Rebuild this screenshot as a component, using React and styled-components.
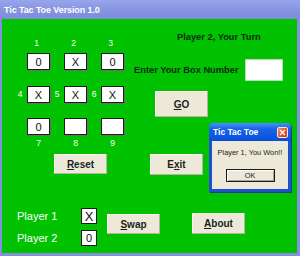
import React from "react";
import styled, { createGlobalStyle } from "styled-components";

const GlobalStyle = createGlobalStyle`
  html, body {
    margin: 0;
    padding: 0;
    background: #ffffff;
  }
  body {
    font-family: "Liberation Sans", Arial, sans-serif;
  }
`;

const Window = styled.div`
  position: relative;
  width: 300px;
  height: 256px;
  box-sizing: border-box;
  display: flex;
  flex-direction: column;
  background: #8391dd;
  padding: 0 3px 3px 2px;
  overflow: hidden;
`;

const TitleBar = styled.div`
  height: 19px;
  margin: 0 -3px 0 -2px;
  padding-left: 4px;
  display: flex;
  align-items: center;
  background: linear-gradient(#97a5ec, #8593e0 60%, #7d8cdb);
  color: #ffffff;
  font-size: 9px;
  font-weight: bold;
  letter-spacing: -0.1px;
`;

const Client = styled.div`
  flex: 1;
  background: #00c200;
  padding: 13px 0 0 11px;
  display: flex;
  flex-direction: column;
`;

const TopSection = styled.div`
  display: flex;
  gap: 10px;
  height: 116px;
`;

const Board = styled.div`
  margin-top: 6px;
  display: grid;
  grid-template-columns: repeat(3, 14px 23px);
  grid-template-rows: 15px 33px 32px 20px 10px;
`;

const Num = styled.span`
  color: #ffffff;
  font-size: 8.5px;
  line-height: ${(p) => (p.$side ? "17px" : "10px")};
  text-align: center;
  align-self: start;
  grid-column: ${(p) => p.$col};
  grid-row: ${(p) => p.$row};
  padding-right: ${(p) => (p.$row === 1 ? "4px" : "0")};
`;

const Cell = styled.div`
  grid-column: ${(p) => p.$col};
  grid-row: ${(p) => p.$row};
  align-self: start;
  height: 17px;
  box-sizing: border-box;
  background: #ffffff;
  border: 1px solid #1c1c1c;
  box-shadow: 1px 1px 0 #5d7a5d;
  display: flex;
  align-items: center;
  justify-content: center;
  font-size: 11px;
  color: #111111;
`;

const StatusPanel = styled.div`
  display: flex;
  flex-direction: column;
`;

const TurnText = styled.div`
  padding-left: 43px;
  line-height: 10px;
  font-size: 9.3px;
  font-weight: bold;
  color: #0c2a0c;
`;

const EntryRow = styled.div`
  margin-top: 17px;
  display: flex;
  align-items: center;
  gap: 6px;
  height: 22px;
`;

const EntryLabel = styled.span`
  font-size: 9.3px;
  font-weight: bold;
  color: #0c2a0c;
  padding-bottom: 1px;
`;

const EntryBox = styled.div`
  width: 38px;
  height: 22px;
  box-sizing: border-box;
  background: #ffffff;
  border: 1px solid #b9dcb9;
`;

const Button = styled.button`
  width: 53px;
  height: ${(p) => p.$h || 20}px;
  margin: ${(p) => p.$m || "0"};
  padding: 0;
  box-sizing: border-box;
  background: #ece9d8;
  border: none;
  box-shadow: inset -1px -1px 0 #b8b4a2, inset 1px 1px 0 #fbfaf4;
  font-family: "Liberation Sans", Arial, sans-serif;
  font-size: 10px;
  font-weight: bold;
  color: #1d1d1d;
  flex-shrink: 0;

  u {
    text-decoration: underline;
    text-underline-offset: 1px;
  }
`;

const ButtonRow = styled.div`
  margin-top: 6px;
  display: flex;
  align-items: flex-start;
`;

const BottomRow = styled.div`
  margin-top: 33px;
  display: flex;
  align-items: flex-start;
`;

const Players = styled.div`
  margin-left: 4px;
  display: flex;
  flex-direction: column;
  gap: 6px;
`;

const PlayerRow = styled.div`
  display: flex;
  align-items: center;
  height: 16px;
`;

const PlayerLabel = styled.span`
  width: 64px;
  color: #ffffff;
  font-size: 11px;
`;

const Mark = styled.div`
  width: 16px;
  height: ${(p) => p.$h}px;
  box-sizing: border-box;
  background: #ffffff;
  border: 1px solid #1c1c1c;
  display: flex;
  align-items: center;
  justify-content: center;
  font-size: ${(p) => p.$size}px;
  color: #111111;
`;

const Dialog = styled.div`
  position: absolute;
  left: 209px;
  top: 123px;
  width: 82px;
  height: 69px;
  box-sizing: border-box;
  padding: 0 3px 3px;
  background: #1f50d0;
  border-radius: 4px 4px 0 0;
  display: flex;
  flex-direction: column;
  box-shadow: 1px 1px 0 #184090;
`;

const DialogTitle = styled.div`
  height: 18px;
  margin: 0 -3px;
  padding: 0 3px 0 4px;
  border-radius: 4px 4px 0 0;
  background: linear-gradient(#4a8ff6, #1663ea 35%, #0c55e0 80%, #0a4cd0);
  display: flex;
  align-items: center;
  justify-content: space-between;
  color: #ffffff;
  font-size: 8.5px;
  font-weight: bold;
`;

const CloseButton = styled.div`
  width: 11px;
  height: 11px;
  box-sizing: border-box;
  border: 1px solid #f4e6e0;
  border-radius: 2px;
  background: linear-gradient(135deg, #f0906a, #dc4e22 60%, #c53c14);
  display: flex;
  align-items: center;
  justify-content: center;
`;

const DialogBody = styled.div`
  flex: 1;
  background: #ece9d8;
  display: flex;
  flex-direction: column;
  align-items: center;
`;

const Message = styled.div`
  margin-top: 7px;
  line-height: 10px;
  font-size: 7.4px;
  color: #1a1a1a;
`;

const OkButton = styled.div`
  margin-top: 11px;
  width: 49px;
  height: 13px;
  box-sizing: border-box;
  border: 1px solid #1a1a1a;
  box-shadow: inset 1px 1px 0 #ffffff, inset -1px -1px 0 #a9a592;
  display: flex;
  align-items: center;
  justify-content: center;
  font-size: 7.4px;
  color: #1a1a1a;
`;

const cells = [
  ["0", "X", "0"],
  ["X", "X", "X"],
  ["0", "", ""],
];

export default function App() {
  return (
    <>
      <GlobalStyle />
      <Window>
        <TitleBar>Tic Tac Toe Version 1.0</TitleBar>
        <Client>
          <TopSection>
            <Board>
              {[1, 2, 3].map((n, i) => (
                <Num key={n} $col={i * 2 + 2} $row={1}>
                  {n}
                </Num>
              ))}
              {[4, 5, 6].map((n, i) => (
                <Num key={n} $col={i * 2 + 1} $row={3} $side>
                  {n}
                </Num>
              ))}
              {[7, 8, 9].map((n, i) => (
                <Num key={n} $col={i * 2 + 2} $row={5}>
                  {n}
                </Num>
              ))}
              {cells.map((row, r) =>
                row.map((v, c) => (
                  <Cell key={`${r}-${c}`} $col={c * 2 + 2} $row={r + 2}>
                    {v}
                  </Cell>
                ))
              )}
            </Board>
            <StatusPanel>
              <TurnText>Player 2, Your Turn</TurnText>
              <EntryRow>
                <EntryLabel>Enter Your Box Number</EntryLabel>
                <EntryBox />
              </EntryRow>
              <Button $h={26} $m="10px 0 0 21px">
                <u>G</u>O
              </Button>
            </StatusPanel>
          </TopSection>
          <ButtonRow>
            <Button $m="0 0 0 41px">
              <u>R</u>eset
            </Button>
            <Button $h={21} $m="0 0 0 43px">
              E<u>x</u>it
            </Button>
          </ButtonRow>
          <BottomRow>
            <Players>
              <PlayerRow>
                <PlayerLabel>Player 1</PlayerLabel>
                <Mark $h={16} $size={13}>X</Mark>
              </PlayerRow>
              <PlayerRow>
                <PlayerLabel>Player 2</PlayerLabel>
                <Mark $h={16} $size={11}>0</Mark>
              </PlayerRow>
            </Players>
            <Button $m="6px 0 0 10px">
              <u>S</u>wap
            </Button>
            <Button $h={21} $m="5px 0 0 32px">
              <u>A</u>bout
            </Button>
          </BottomRow>
        </Client>
        <Dialog>
          <DialogTitle>
            <span>Tic Tac Toe</span>
            <CloseButton>
              <svg width="7" height="7" viewBox="0 0 7 7">
                <path d="M1 1L6 6M6 1L1 6" stroke="#ffffff" strokeWidth="1.4" />
              </svg>
            </CloseButton>
          </DialogTitle>
          <DialogBody>
            <Message>Player 1, You Won!!</Message>
            <OkButton>OK</OkButton>
          </DialogBody>
        </Dialog>
      </Window>
    </>
  );
}
